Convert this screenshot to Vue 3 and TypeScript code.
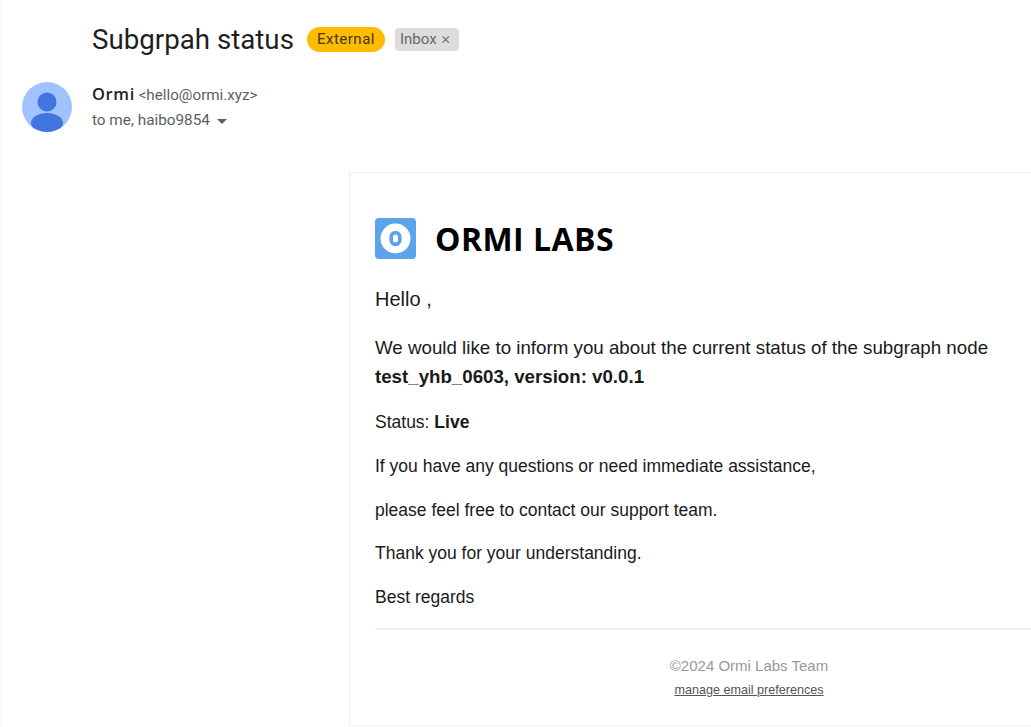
<template>
  <div class="page">
    <header class="subject">
      <h1>Subgrpah status</h1>
      <span class="chip external">External</span>
      <span class="chip inbox">Inbox <span class="close">×</span></span>
    </header>

    <div class="sender">
      <svg class="avatar" width="50" height="50" viewBox="0 0 50 50">
        <defs>
          <clipPath id="avatar-clip"><circle cx="25" cy="25" r="25" /></clipPath>
        </defs>
        <circle cx="25" cy="25" r="25" fill="#a0c3ff" />
        <g clip-path="url(#avatar-clip)" fill="#4375e0">
          <circle cx="25" cy="20" r="9.5" />
          <ellipse cx="25" cy="41" rx="16" ry="10" />
        </g>
      </svg>
      <div class="sender-text">
        <div class="from"><strong>Ormi</strong> <span>&lt;hello@ormi.xyz&gt;</span></div>
        <div class="to">to me, haibo9854 <i class="caret"></i></div>
      </div>
    </div>

    <main class="card">
      <div class="brand">
        <svg width="41" height="41" viewBox="0 0 41 41">
          <rect width="41" height="41" rx="4" fill="#5ba3ea" />
          <circle cx="20.5" cy="20.5" r="15" fill="#fff" />
          <rect x="16.2" y="14.6" width="8.6" height="11.8" rx="4.3" fill="none" stroke="#5ba3ea" stroke-width="3.6" />
        </svg>
        <span>ORMI LABS</span>
      </div>
      <p class="hello">Hello ,</p>
      <p class="intro">
        We would like to inform you about the current status of the subgraph node<br />
        <b>test_yhb_0603, version: v0.0.1</b>
      </p>
      <p v-for="(line, i) in lines" :key="i" class="line">
        {{ line.text }}<b v-if="line.bold">{{ line.bold }}</b>
      </p>
      <hr />
      <footer>
        <div class="copy">©2024 Ormi Labs Team</div>
        <a class="manage">manage email preferences</a>
      </footer>
    </main>
  </div>
</template>

<script setup lang="ts">
const lines: { text: string; bold?: string }[] = [
  { text: "Status: ", bold: "Live" },
  { text: "If you have any questions or need immediate assistance," },
  { text: "please feel free to contact our support team." },
  { text: "Thank you for your understanding." },
  { text: "Best regards" }
]
</script>

<style>
html, body {
  margin: 0;
  overflow: hidden;
  background: #fff;
}
</style>

<style scoped>
.page {
  box-sizing: border-box;
  width: 1031px;
  height: 727px;
  overflow: hidden;
  border-left: 2px solid #f6f8fc;
  font-family: "Liberation Sans", Arial, sans-serif;
  color: #222;
}

.subject {
  display: flex;
  align-items: center;
  height: 78px;
  padding-left: 90px;
  font-family: Roboto, sans-serif;
}

.subject h1 {
  margin: 0 13px 0 0;
  font-size: 27.7px;
  font-weight: 400;
  color: #1f1f1f;
}

.chip {
  box-sizing: border-box;
  font-size: 15px;
}

.external {
  height: 25px;
  line-height: 25px;
  padding: 0 10px;
  border-radius: 13px;
  background: #fdbc02;
  color: #4a3500;
  letter-spacing: 0.5px;
}

.inbox {
  height: 23px;
  line-height: 22px;
  margin-left: 10px;
  padding: 0 9px 0 5px;
  border-radius: 4px;
  background: #dddddd;
  color: #666;
}

.close {
  margin-left: 1px;
  font-size: 17px;
  font-weight: 300;
  line-height: 1;
}

.sender {
  display: flex;
  align-items: flex-start;
  gap: 20px;
  margin-top: 4px;
  padding-left: 20px;
  font-family: Roboto, sans-serif;
}

.avatar {
  flex: none;
}

.from {
  margin-top: 1px;
  line-height: 22px;
  font-size: 15.2px;
  color: #5e5e5e;
}

.from strong {
  font-family: "Open Sans", sans-serif;
  font-size: 16.5px;
  font-weight: 600;
  color: #1f1f1f;
  letter-spacing: 0.6px;
}

.to {
  margin-top: 4px;
  line-height: 20px;
  font-size: 15.3px;
  color: #5e5e5e;
}

.caret {
  display: inline-block;
  margin-left: 3px;
  vertical-align: 1px;
  border: 5px solid transparent;
  border-top-color: #5e5e5e;
  border-bottom: 0;
}

.card {
  box-sizing: border-box;
  width: 800px;
  height: 554px;
  margin: 40px 0 0 347px;
  padding: 44px 25px 0;
  border: 1px solid #eeeeee;
  color: #1a1a1a;
}

.brand {
  display: flex;
  align-items: center;
  gap: 19px;
  font-family: "Open Sans", sans-serif;
  font-size: 32px;
  font-weight: 700;
  letter-spacing: 0.45px;
  color: #000;
}

.card p {
  margin: 0;
}

.hello {
  margin-top: 25px !important;
  font-size: 20px;
  line-height: 28px;
}

.intro {
  margin-top: 21px !important;
  font-size: 18.74px;
  line-height: 28.5px;
}

.intro b {
  font-size: 18.7px;
}

.line {
  margin-top: 20px !important;
  font-size: 17.5px;
  line-height: 23.75px;
}

hr {
  margin: 18px 0 0;
  border: 0;
  border-top: 2px solid #eeeeee;
}

footer {
  margin-top: 26px;
  text-align: center;
}

.copy {
  font-size: 15px;
  line-height: 20px;
  color: #999;
}

.manage {
  display: inline-block;
  margin-top: 6px;
  font-size: 12.6px;
  line-height: 16px;
  color: #555;
  text-decoration: underline;
}
</style>
